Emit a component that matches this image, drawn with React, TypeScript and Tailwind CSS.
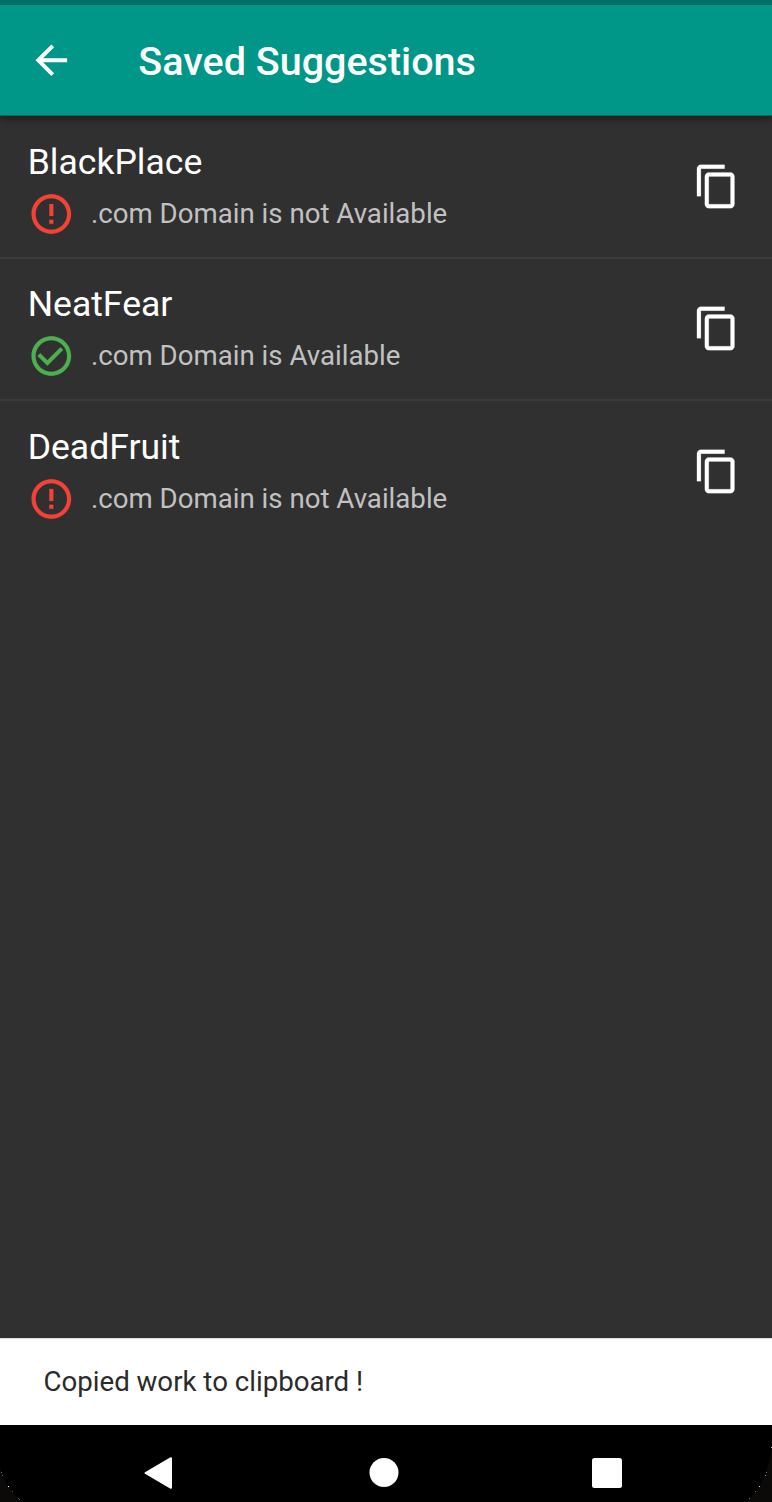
import React from "react";

const items = [
  { name: "BlackPlace", available: false },
  { name: "NeatFear", available: true },
  { name: "DeadFruit", available: false },
];

const cornerDots = [
  [1, 47, 0.4],
  [2, 50, 0.4],
  [8, 61, 1],
  [12, 66, 0.35],
  [18, 73, 0.35],
  [19, 74, 0.35],
  [771, 22, 0.8],
  [766, 47, 0.4],
  [765, 50, 0.5],
  [759, 61, 0.8],
  [755, 66, 0.4],
  [749, 73, 0.4],
];

function StatusIcon({ available }: { available: boolean }) {
  return available ? (
    <svg viewBox="-0.32 -0.12 24.3 24.3" className="size-12 shrink-0 fill-[#4caf50] stroke-[#4caf50] [stroke-width:0.1]">
      <path d="M16.59 7.58L10 14.17l-3.59-3.58L5 12l5 5 8-8zM12 2C6.48 2 2 6.48 2 12s4.48 10 10 10 10-4.48 10-10S17.52 2 12 2zm0 18c-4.42 0-8-3.58-8-8s3.58-8 8-8 8 3.58 8 8-3.58 8-8 8z" />
    </svg>
  ) : (
    <svg viewBox="-0.32 -0.12 24.3 24.3" className="size-12 shrink-0 fill-[#f44336] stroke-[#f44336] [stroke-width:0.1]">
      <path d="M11 15h2v2h-2zm0-8h2v6h-2zm.99-5C6.47 2 2 6.48 2 12s4.47 10 9.99 10C17.52 22 22 17.52 22 12S17.52 2 11.99 2zM12 20c-4.42 0-8-3.58-8-8s3.58-8 8-8 8 3.58 8 8-3.58 8-8 8z" />
    </svg>
  );
}

export default function App() {
  return (
    <div className="flex h-[1502px] w-[772px] flex-col overflow-hidden bg-[#303030] font-['Roboto',sans-serif] text-white">
      <div className="z-20 h-[5px] shrink-0 bg-[#007168]" />
      <header className="z-10 flex h-[110px] shrink-0 items-center bg-[#009688] pl-[27px] shadow-[0_1px_0_#0f665e,0_3px_8px_rgba(0,0,0,0.5)]">
        <svg viewBox="-0.32 -0.25 24.3 24.3" className="size-12 shrink-0 fill-white">
          <path d="M20 11H7.83l5.59-5.59L12 4l-8 8 8 8 1.41-1.41L7.83 13H20v-2z" />
        </svg>
        <h1 className="ml-[63.3px] pt-[3px] text-[39.5px] leading-[48px] font-medium whitespace-nowrap">Saved Suggestions</h1>
      </header>
      <main className="flex-1">
        {items.map((item, i) => (
          <div key={item.name} className="flex h-[142px] flex-col">
            <div className={`h-[2px] shrink-0 ${i > 0 ? "bg-[#3b3b3b]" : ""}`} />
            <div className={`flex justify-between pr-8 pl-[27px] ${i === 2 ? "pt-px" : ""}`}>
              <div className="pt-6">
                <div className="ml-[0.7px] text-[35.55px] leading-[42px] whitespace-nowrap">{item.name}</div>
                <div className="mt-[7px] flex items-center">
                  <StatusIcon available={item.available} />
                  <span className="ml-[15.9px] text-[27.65px] leading-8 whitespace-nowrap text-[#c1c1c1]">
                    .com Domain is {item.available ? "" : "not "}Available
                  </span>
                </div>
              </div>
              <svg viewBox="-0.5 0.15 24.3 24.3" className="mt-[46px] size-12 fill-white stroke-white [stroke-width:0.1]">
                <path d="M16 1H4c-1.1 0-2 .9-2 2v14h2V3h12V1zm3 4H8c-1.1 0-2 .9-2 2v14c0 1.1.9 2 2 2h11c1.1 0 2-.9 2-2V7c0-1.1-.9-2-2-2zm0 16H8V7h11v14z" />
              </svg>
            </div>
          </div>
        ))}
      </main>
      <div className="flex h-[87px] shrink-0 items-center border-t border-[#dedede] bg-white pl-[43.5px] text-[27.65px] text-[#2b2b2b]">Copied work to clipboard !</div>
      <nav className="h-[77px] shrink-0 bg-black">
        <svg viewBox="0 0 772 77" className="h-[77px] w-[772px] fill-white">
          <path d="M0 42C3 54 10 65 21 77H0Z" fill="#0b0a09" />
          <path d="M772 21C769 46 761 63 746 77H772Z" fill="#0b0a09" />
          {cornerDots.map(([x, y, opacity]) => (
            <rect key={`${x}-${y}`} x={x} y={y} width="1" height="1" opacity={opacity} />
          ))}
          <path d="M145.500 48L171 33.200V62.800Z" stroke="white" strokeWidth="2" strokeLinejoin="round" />
          <circle cx="384" cy="47.500" r="14.500" />
          <rect x="592" y="33" width="30" height="30" rx="2.500" />
        </svg>
      </nav>
    </div>
  );
}
